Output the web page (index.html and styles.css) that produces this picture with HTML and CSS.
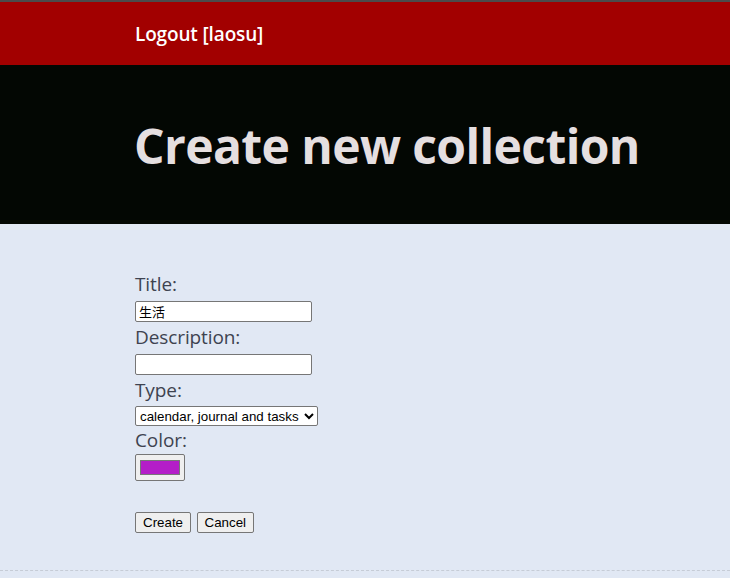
FILE: index.html
```html
<!DOCTYPE html>
<html>
<head>
<meta charset="utf-8">
<title>Create new collection</title>
<link rel="stylesheet" href="styles.css">
</head>
<body>
<header class="topbar">
  <a class="logout" href="#">Logout [laosu]</a>
</header>
<section class="hero">
  <h1>Create new collection</h1>
</section>
<main class="content">
  <form class="form">
    <label class="lbl lbl-title">Title:</label>
    <input class="txt" type="text" value="生活">
    <label class="lbl lbl-desc">Description:</label>
    <input class="txt" type="text" value="">
    <label class="lbl lbl-type">Type:</label>
    <select class="sel">
      <option>calendar, journal and tasks</option>
    </select>
    <label class="lbl lbl-color">Color:</label>
    <input class="color" type="color" value="#b41ec8">
    <div class="buttons">
      <button type="button" class="btn">Create</button>
      <button type="button" class="btn">Cancel</button>
    </div>
  </form>
  <div class="rule"></div>
</main>
</body>
</html>
```

FILE: styles.css
```css
html, body {
  margin: 0;
  padding: 0;
}
body {
  background: #e1e8f4;
  font-family: "Open Sans", "Noto Sans", sans-serif;
  border-top: 2px solid #4b4b4b;
}
.topbar {
  background: #a20000;
  height: 63px;
  display: flex;
  align-items: center;
  padding-left: 135px;
}
.logout {
  color: #ffffff;
  text-decoration: none;
  font-size: 19px;
  font-weight: 600;
  letter-spacing: -0.15px;
  margin-top: 1px;
}
.hero {
  background: #030703;
  height: 159px;
  display: flex;
  align-items: center;
  padding-left: 134px;
}
.hero h1 {
  margin: 0;
  color: #e5dfe0;
  font-size: 48px;
  font-weight: 700;
  letter-spacing: -0.6px;
  margin-top: 2px;
}
.content {
  padding-top: 45px;
}
.form {
  display: flex;
  flex-direction: column;
  align-items: flex-start;
  padding-left: 135px;
}
.lbl {
  display: block;
  box-sizing: border-box;
  color: #3e4350;
  font-size: 19px;
  line-height: 24px;
  padding-top: 3px;
  letter-spacing: -0.1px;
}
.lbl-title { height: 32px; }
.lbl-desc { height: 32px; }
.lbl-type { height: 31px; }
.lbl-color { height: 28px; padding-top: 2px; }
.txt {
  box-sizing: border-box;
  width: 177px;
  height: 21px;
  margin: 0;
  font-family: "Noto Sans CJK SC", "Liberation Sans", sans-serif;
  font-size: 13px;
  padding: 1px 3px;
  border: 1px solid #767676;
  border-radius: 2px;
  background: #fff;
}
.sel {
  box-sizing: border-box;
  width: 183px;
  height: 20px;
  margin: 0;
  font-family: "Liberation Sans", Arial, sans-serif;
  font-size: 13.33px;
  border: 1px solid #767676;
  border-radius: 2px;
  background: #fff;
}
.color {
  box-sizing: border-box;
  width: 50px;
  height: 27px;
  margin: 0;
  padding: 1px 2px;
  border: 1px solid #767676;
  border-radius: 2px;
  background: #efefef;
}
.buttons {
  display: flex;
  gap: 6px;
  margin-top: 31px;
}
.btn {
  box-sizing: border-box;
  font-family: "Liberation Sans", Arial, sans-serif;
  font-size: 13.33px;
  height: 21px;
  padding: 1px 7px;
  border: 1px solid #767676;
  border-radius: 2px;
  background: #efefef;
  color: #000;
}
.btn + .btn { padding: 1px 6.5px; }
.rule {
  margin-top: 37px;
  border-top: 1px dashed #c6ccd6;
}
```
